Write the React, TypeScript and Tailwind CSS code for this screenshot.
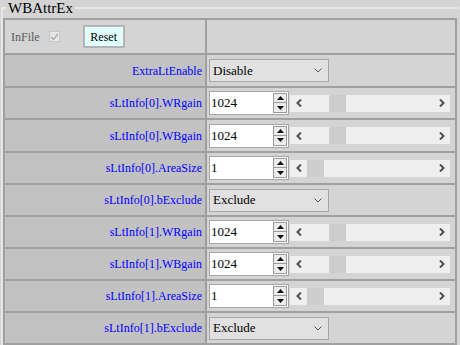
import React from 'react';

type Row =
  | { label: string; kind: 'select'; value: string; h: number }
  | { label: string; kind: 'range'; value: string; pos: number; h: number };

const rows: Row[] = [
  { label: 'ExtraLtEnable', kind: 'select', value: 'Disable', h: 33 },
  { label: 'sLtInfo[0].WRgain', kind: 'range', value: '1024', pos: 22, h: 32 },
  { label: 'sLtInfo[0].WBgain', kind: 'range', value: '1024', pos: 22, h: 33 },
  { label: 'sLtInfo[0].AreaSize', kind: 'range', value: '1', pos: 0, h: 32 },
  { label: 'sLtInfo[0].bExclude', kind: 'select', value: 'Exclude', h: 32 },
  { label: 'sLtInfo[1].WRgain', kind: 'range', value: '1024', pos: 22, h: 32 },
  { label: 'sLtInfo[1].WBgain', kind: 'range', value: '1024', pos: 22, h: 32 },
  { label: 'sLtInfo[1].AreaSize', kind: 'range', value: '1', pos: 0, h: 32 },
  { label: 'sLtInfo[1].bExclude', kind: 'select', value: 'Exclude', h: 32 },
];

function Select({ value }: { value: string }) {
  return (
    <div className="flex items-center justify-between w-[120px] h-[23px] bg-[#e1e1e1] border border-[#a6a6a6] pl-[3px] pr-[6px] text-[13px] text-black">
      <span>{value}</span>
      <svg width="8" height="5" viewBox="0 0 8 5">
        <polyline points="0.5,0.5 4,4 7.5,0.5" fill="none" stroke="#555" strokeWidth="1" />
      </svg>
    </div>
  );
}

function Arrow({ dir }: { dir: 'l' | 'r' }) {
  return (
    <div className="w-[17px] h-full flex items-center justify-center">
      <svg width="6" height="8" viewBox="0 0 6 8">
        {dir === 'l' ? (
          <polyline points="5,0.5 1.5,4 5,7.5" fill="none" stroke="#505050" strokeWidth="2" />
        ) : (
          <polyline points="1,0.5 4.5,4 1,7.5" fill="none" stroke="#505050" strokeWidth="2" />
        )}
      </svg>
    </div>
  );
}

function Range({ value, pos }: { value: string; pos: number }) {
  return (
    <div className="flex items-center gap-[1px]">
      <div className="flex items-center w-[80px] h-[24px] bg-white border border-[#a6a6a6] pl-[1px] pr-[1px] text-[13px] text-black">
        <span className="flex-1">{value}</span>
        <div className="flex flex-col w-[14px]">
          <div className="h-[10px] flex items-center justify-center bg-[#ececec] border border-[#9a9a9a]">
            <svg width="7" height="4" viewBox="0 0 7 4"><polygon points="3.5,0 7,4 0,4" fill="#111" /></svg>
          </div>
          <div className="h-[10px] flex items-center justify-center bg-[#ececec] border border-t-0 border-[#9a9a9a]">
            <svg width="7" height="4" viewBox="0 0 7 4"><polygon points="0,0 7,0 3.5,4" fill="#111" /></svg>
          </div>
        </div>
      </div>
      <div className="flex items-center w-[160px] h-[17px] bg-[#efefef]">
        <Arrow dir="l" />
        <div className="relative flex-1 h-full">
          <div className="absolute top-0 h-full w-[17px] bg-[#cdcdcd]" style={{ left: pos }} />
        </div>
        <Arrow dir="r" />
      </div>
    </div>
  );
}

export default function App() {
  return (
    <div className="w-[460px] h-[345px] bg-[#d4d4d4] overflow-hidden font-['Liberation_Serif',serif]">
      <fieldset className="ml-px w-[458px] border-t-2 border-l-2 border-[#e6e6e6] p-0">
        <legend className="ml-[3px] px-[2px] text-[15px] leading-[16px] text-black">WBAttrEx</legend>
        <table className="mt-[2px] w-[454px] border border-[#a0a0a0] border-separate border-spacing-0">
          <tbody>
            <tr className="h-[35px]">
              <td className="w-[202px] border border-[#a0a0a0] bg-[#d4d4d4] p-0">
                <div className="flex items-center pl-[6px] text-[12px]">
                  <span className="text-[#5a5a5a]">InFile</span>
                  <span className="ml-[9px] w-[11px] h-[11px] border border-[#c8c8c8] bg-[#e6e6e6] flex items-center justify-center">
                    <svg width="9" height="8" viewBox="0 0 9 8">
                      <polyline points="1,4 3.5,6.5 8,1" fill="none" stroke="#a8a8a8" strokeWidth="1.3" />
                    </svg>
                  </span>
                  <button className="ml-[23px] w-[42px] h-[23px] bg-[#e2ffff] border-2 border-[#b4b4b4] text-[12px] text-black">Reset</button>
                </div>
              </td>
              <td className="border border-[#a0a0a0] bg-[#d4d4d4] p-0"></td>
            </tr>
            {rows.map((r) => (
              <tr key={r.label} style={{ height: r.h }}>
                <td className="border border-[#a0a0a0] bg-[#c2c2c2] pr-[3px] text-right text-[12px] text-[#0000ff]">{r.label}</td>
                <td className="border border-[#a0a0a0] bg-[#d4d4d4] pl-[2px] py-0">
                  {r.kind === 'select' ? <Select value={r.value} /> : <Range value={r.value} pos={r.pos} />}
                </td>
              </tr>
            ))}
          </tbody>
        </table>
      </fieldset>
    </div>
  );
}
